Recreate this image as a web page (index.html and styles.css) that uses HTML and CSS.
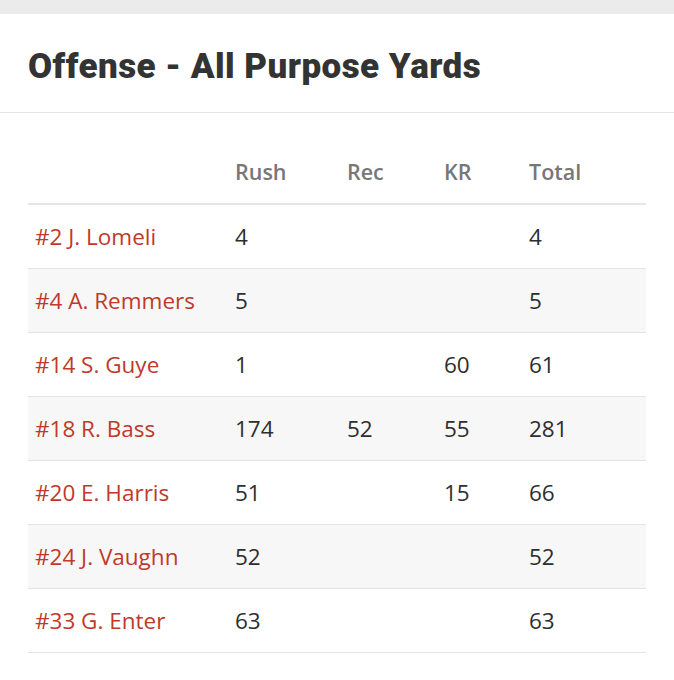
FILE: index.html
```html
<!DOCTYPE html>
<html>
<head>
<meta charset="utf-8">
<link rel="stylesheet" href="styles.css">
</head>
<body>
<div class="topbar"></div>
<div class="card">
  <h1 class="title">Offense - All Purpose Yards</h1>
  <div class="body">
    <table class="stats">
      <thead>
        <tr><th class="c-name"></th><th class="c-rush">Rush</th><th class="c-rec">Rec</th><th class="c-kr">KR</th><th class="c-tot">Total</th></tr>
      </thead>
      <tbody>
        <tr><td class="name">#2 J. Lomeli</td><td>4</td><td></td><td></td><td>4</td></tr>
        <tr><td class="name">#4 A. Remmers</td><td>5</td><td></td><td></td><td>5</td></tr>
        <tr><td class="name">#14 S. Guye</td><td>1</td><td></td><td>60</td><td>61</td></tr>
        <tr><td class="name">#18 R. Bass</td><td>174</td><td>52</td><td>55</td><td>281</td></tr>
        <tr><td class="name">#20 E. Harris</td><td>51</td><td></td><td>15</td><td>66</td></tr>
        <tr><td class="name">#24 J. Vaughn</td><td>52</td><td></td><td></td><td>52</td></tr>
        <tr><td class="name">#33 G. Enter</td><td>63</td><td></td><td></td><td>63</td></tr>
      </tbody>
    </table>
  </div>
</div>
</body>
</html>
```
FILE: styles.css
```css
html, body { margin: 0; padding: 0; background: #fff; }
body { font-family: "Open Sans", "Liberation Sans", sans-serif; }
.topbar { height: 14px; background: #ebebeb; }
.card { background: #fff; }
.title {
  margin: 0;
  padding: 33px 28px 0 28px;
  height: 65px;
  font-family: Roboto, "Open Sans", sans-serif;
  font-weight: 900;
  font-size: 35px;
  letter-spacing: 0.45px;
  line-height: 40px;
  color: #333;
  border-bottom: 1px solid #e4e4e4;
}
.body { padding: 44px 28px 0 28px; }
.stats { width: 618px; border-collapse: collapse; table-layout: fixed; }
.stats th {
  text-align: left;
  font-weight: 600;
  font-size: 21.5px;
  color: #777;
  height: 46px;
  padding: 0 0 0 7px;
  vertical-align: top;
  line-height: 30px;
  border-bottom: 2px solid #e6e6e6;
}
.c-name { width: 193px; }
.c-rush { width: 105px; }
.c-rec { width: 90px; }
.c-kr { width: 78px; }
.c-tot { width: 117px; }
.stats td {
  height: 63px;
  padding: 0 0 0 7px;
  font-size: 22.5px;
  color: #2e2e2e;
  border-bottom: 1px solid #e3e3e3;
  vertical-align: middle;
  white-space: nowrap;
}
.stats td.name { color: #c0392b; }
.stats tbody tr:nth-child(even) td { background: #f7f7f7; }
```
